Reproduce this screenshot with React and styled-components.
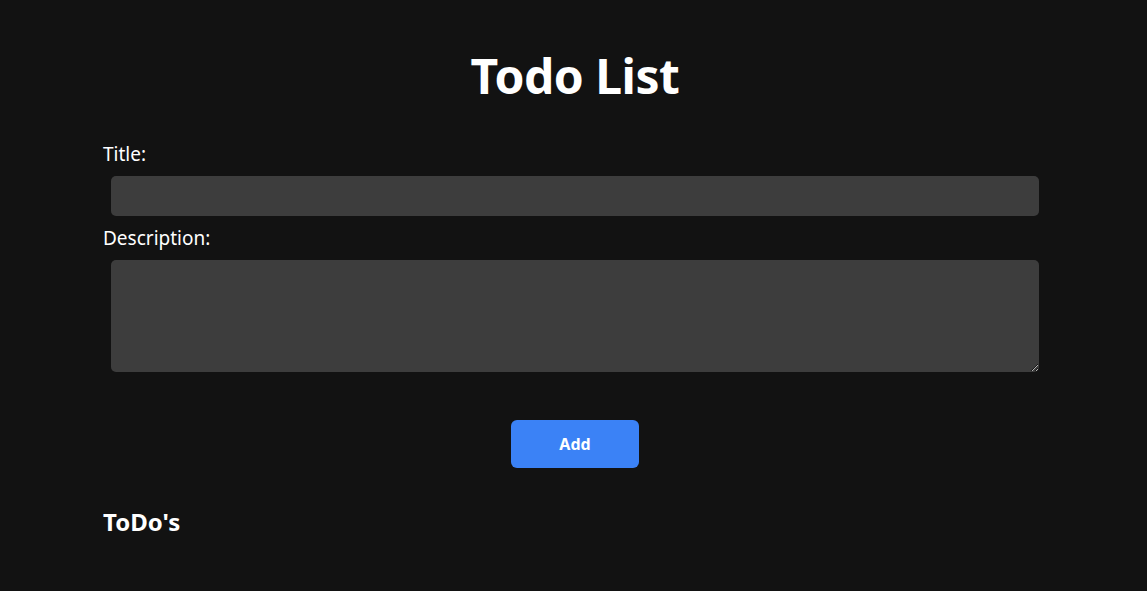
import React, { useState } from "react";
import styled, { createGlobalStyle } from "styled-components";

const GlobalStyle = createGlobalStyle`
  html, body { margin: 0; padding: 0; background: #121212; }
  body { font-family: "Noto Sans", "Open Sans", "DejaVu Sans", sans-serif; color: #ffffff; }
  * { box-sizing: border-box; }
`;

const Page = styled.div`
  min-height: 591px;
  background: #121212;
  padding: 48px 100px 0 103px;
`;

const Container = styled.div`
  width: 944px;
`;

const Heading = styled.h1`
  margin: 0 0 38px;
  text-align: center;
  font-size: 48px;
  line-height: 56px;
  font-weight: 700;
  letter-spacing: -0.5px;
`;

const Form = styled.form`
  display: flex;
  flex-direction: column;
`;

const Label = styled.label`
  display: block;
  font-size: 19px;
  line-height: 24px;
  margin-bottom: 10px;
`;

const Field = styled.input`
  display: block;
  height: 40px;
  margin: 0 8px 10px;
  background: #3d3d3d;
  border: none;
  border-radius: 5px;
  color: #fff;
  font-family: inherit;
  font-size: 16px;
  padding: 0 10px;
  outline: none;
`;

const Area = styled.textarea`
  display: block;
  height: 112px;
  margin: 0 8px 48px;
  background: #3d3d3d;
  border: none;
  border-radius: 5px;
  color: #fff;
  font-family: inherit;
  font-size: 16px;
  padding: 10px;
  outline: none;
  resize: vertical;
`;

const Button = styled.button`
  align-self: center;
  width: 128px;
  height: 48px;
  background: #3b82f6;
  border: none;
  border-radius: 6px;
  color: #fff;
  font-family: "Noto Sans", "Open Sans", sans-serif;
  font-size: 16px;
  font-weight: 700;
  cursor: pointer;
`;

const ListTitle = styled.h2`
  margin: 38px 0 0;
  font-size: 24px;
  line-height: 32px;
  font-weight: 700;
`;

export default function App() {
  const [title, setTitle] = useState("");
  const [desc, setDesc] = useState("");
  return (
    <Page>
      <GlobalStyle />
      <Container>
        <Heading>Todo List</Heading>
        <Form onSubmit={(e) => e.preventDefault()}>
          <Label htmlFor="title">Title:</Label>
          <Field id="title" value={title} onChange={(e) => setTitle(e.target.value)} />
          <Label htmlFor="desc">Description:</Label>
          <Area id="desc" value={desc} onChange={(e) => setDesc(e.target.value)} />
          <Button type="submit">Add</Button>
        </Form>
        <ListTitle>ToDo's</ListTitle>
      </Container>
    </Page>
  );
}
